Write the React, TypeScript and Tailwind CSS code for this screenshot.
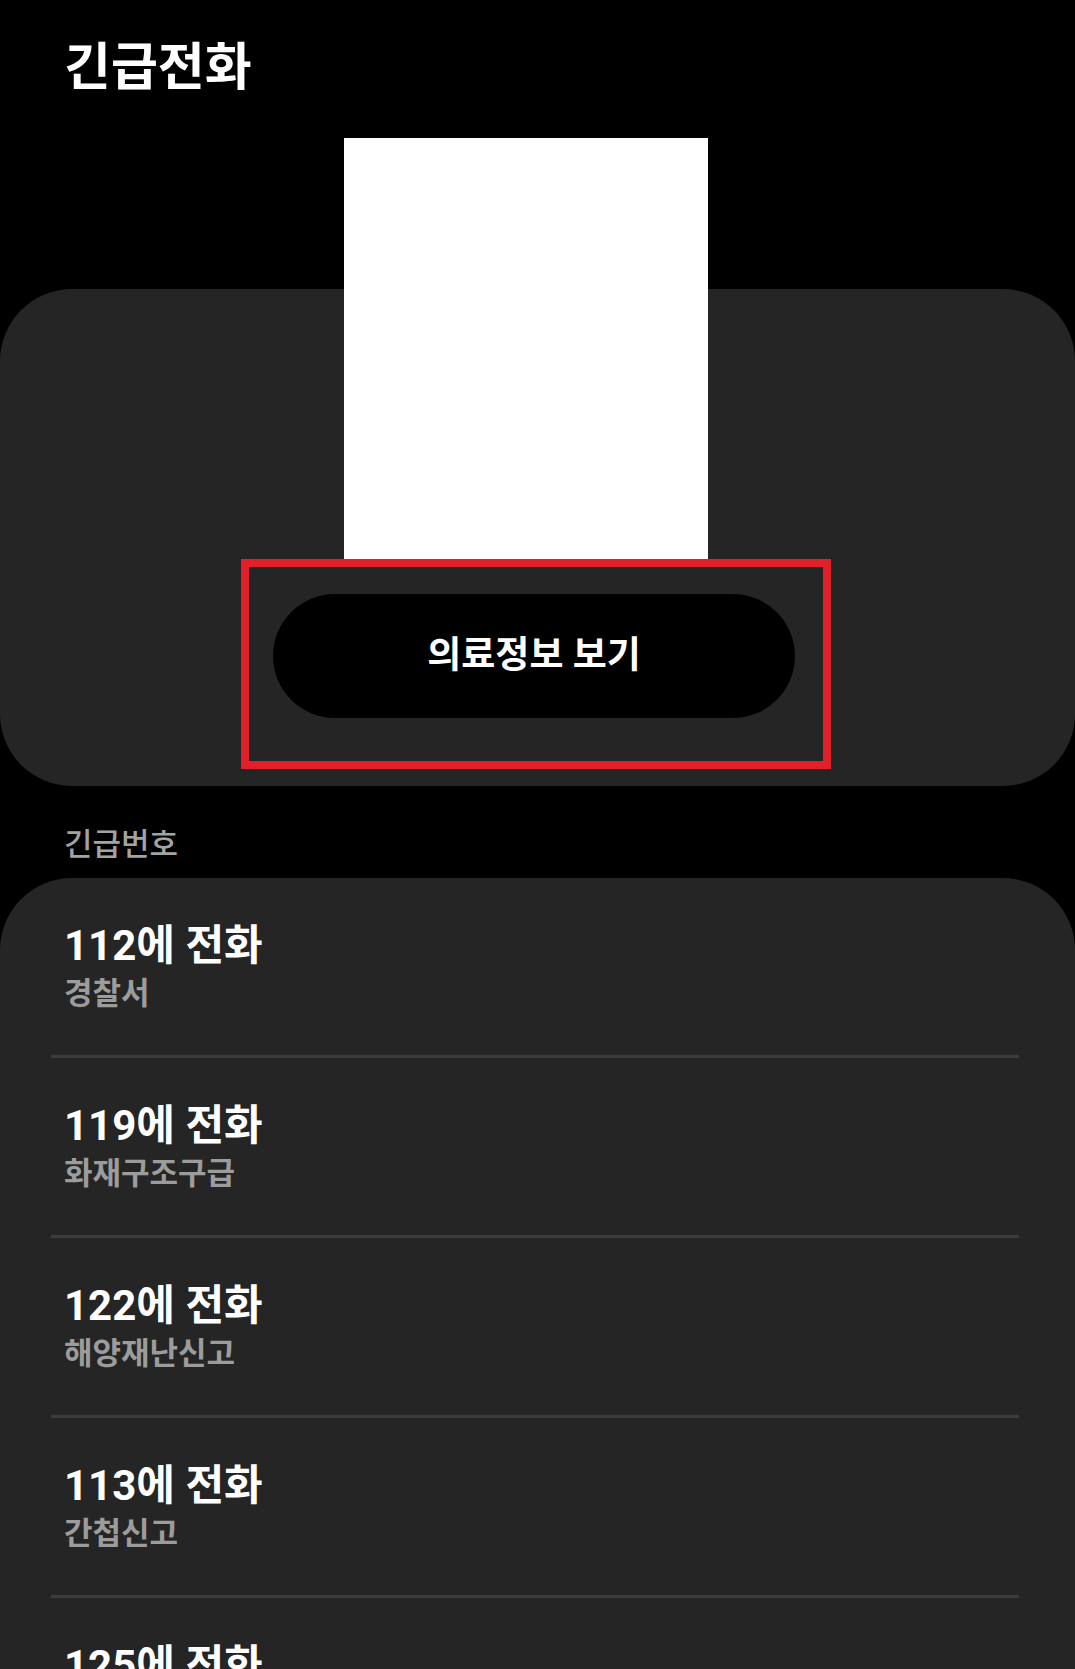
import React from "react";

const rows = [
  { num: "112", desc: "경찰서" },
  { num: "119", desc: "화재구조구급" },
  { num: "122", desc: "해양재난신고" },
  { num: "113", desc: "간첩신고" },
  { num: "125", desc: "밀수신고" },
];

export default function App() {
  return (
    <div
      className="h-[1669px] w-full bg-black overflow-hidden"
      style={{ fontFamily: "Roboto, 'Noto Sans CJK KR', sans-serif" }}
    >
      <div className="pl-[64px] pt-[38px] text-[51px] leading-[60px] font-bold text-white">
        긴급전화
      </div>

      <div className="mt-[191px] flex w-full flex-col items-start rounded-[72px] bg-[#252525] pb-[17px]">
        <div className="ml-[344px] -mt-[151px] h-[421px] w-[364px] bg-white" />
        <div className="ml-[241px] w-[590px] border-[8px] border-[#e2202a] pl-[24px] pr-[28px] pt-[27px] pb-[43px]">
          <div className="flex h-[124px] w-full items-center justify-center rounded-full bg-black">
            <span className="text-[37px] font-bold text-white">의료정보 보기</span>
          </div>
        </div>
      </div>

      <div className="pl-[64px] pt-[38px] pb-[12px] text-[31px] leading-[42px] font-medium text-[#a3a3a3]">
        긴급번호
      </div>

      <div className="w-full rounded-t-[72px] bg-[#252525]">
        {rows.map((r, i) => (
          <div key={r.num}>
            <div className="pl-[64px] pt-[43px] pb-[41px]">
              <div className="text-[42px] leading-[50px] font-bold text-white">
                {r.num}에 전화
              </div>
              <div className="mt-[3px] text-[31px] leading-[40px] font-semibold text-[#9c9c9c]">
                {r.desc}
              </div>
            </div>
            {i < rows.length - 1 && (
              <div className="ml-[51px] mr-[56px] h-[3px] bg-[#3c3c3c]" />
            )}
          </div>
        ))}
      </div>
    </div>
  );
}
